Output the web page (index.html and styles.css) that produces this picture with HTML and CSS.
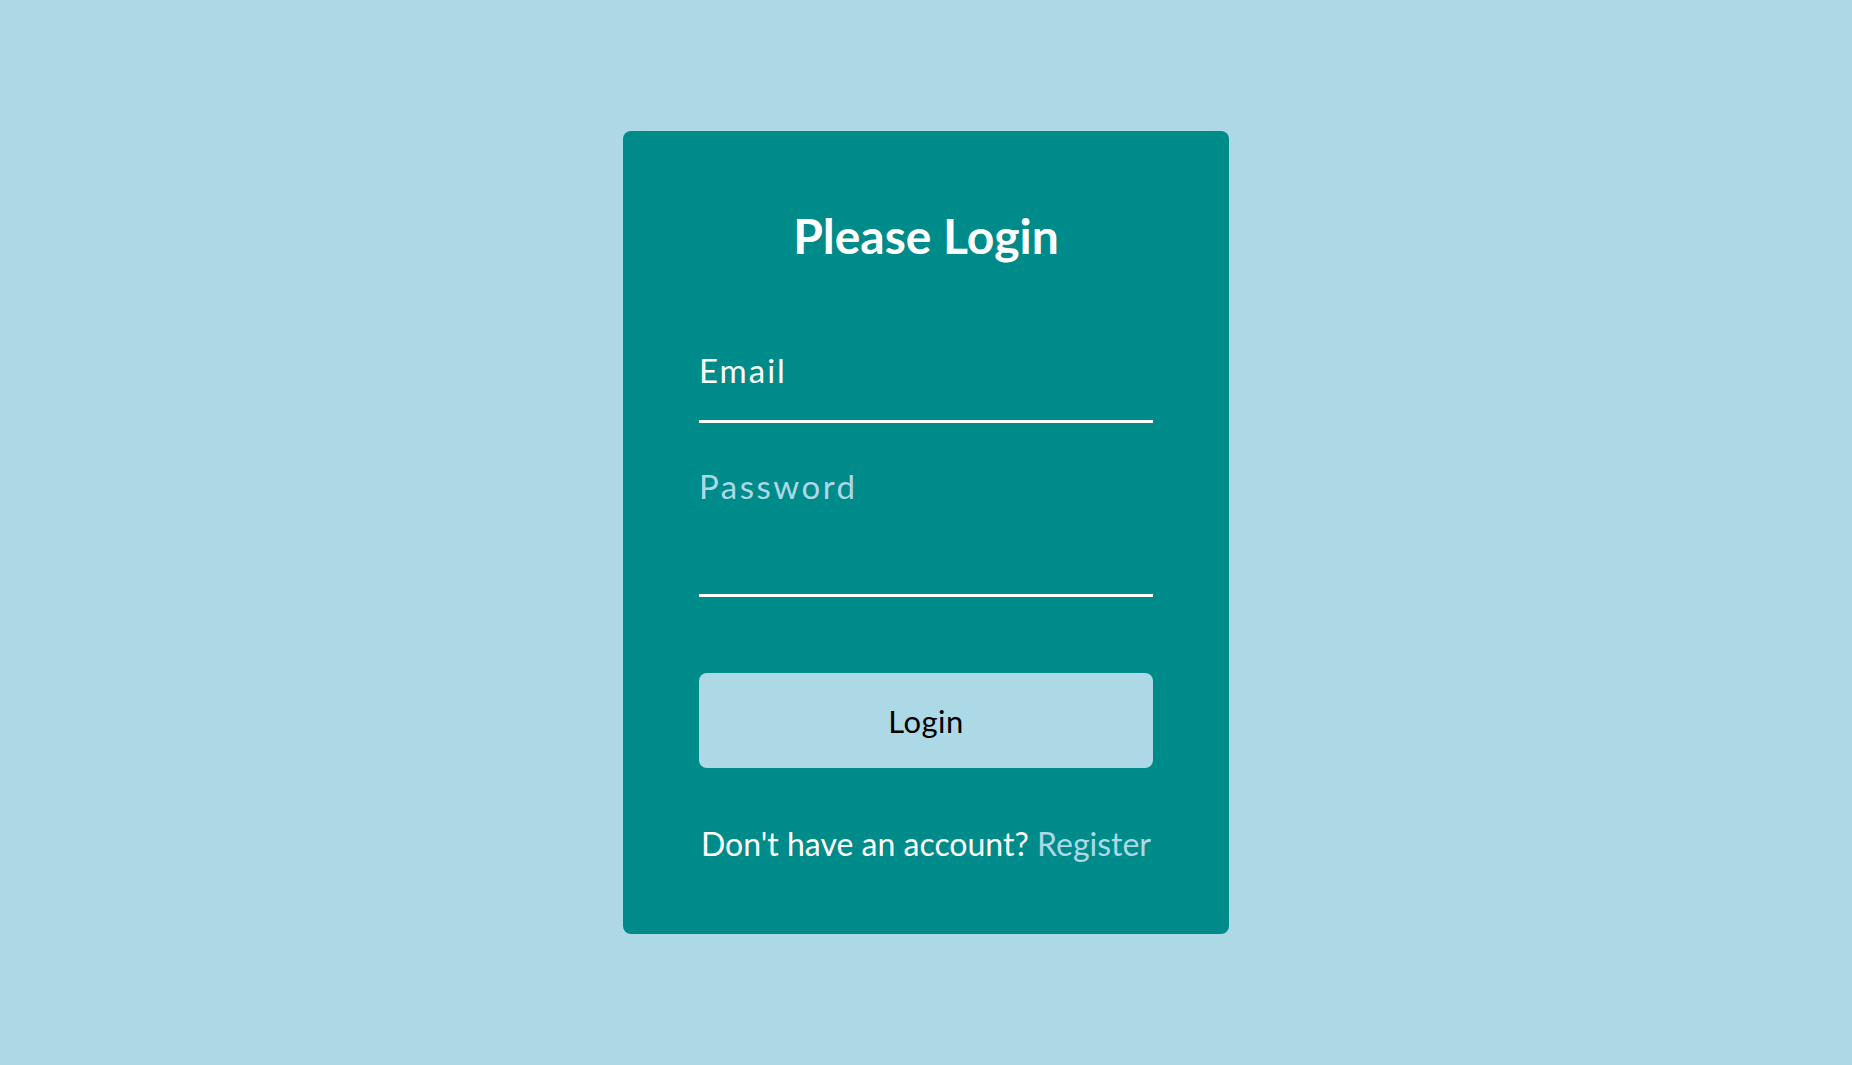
FILE: index.html
```html
<!DOCTYPE html>
<html lang="en">
<head>
  <meta charset="UTF-8">
  <meta name="viewport" content="width=device-width, initial-scale=1.0">
  <title>Login</title>
  <link rel="stylesheet" href="styles.css">
</head>
<body>
  <main class="card">
    <h1>Please Login</h1>

    <form class="login-form" onsubmit="return false">
      <input type="email" class="email" placeholder="Email">
      <input type="password" class="password" placeholder="Password">
      <button type="submit">Login</button>
    </form>

    <p class="register">Don't have an account? <a href="#">Register</a></p>
  </main>
</body>
</html>
```

FILE: styles.css
```css
body {
  font-family: Lato, "Open Sans", sans-serif;
  background-color: #add8e6;
  margin: 0;
  min-height: 100vh;
  display: flex;
  align-items: center;
  justify-content: center;
}
.card {
  width: 606px;
  box-sizing: border-box;
  background-color: #008b8b;
  border-radius: 8px;
  padding: 76px 76px 70px;
}
h1 {
  margin: 0;
  color: white;
  font-size: 48px;
  font-weight: bold;
  line-height: 1.2;
  text-align: center;
}
.login-form {
  display: flex;
  flex-direction: column;
}
input {
  width: 100%;
  box-sizing: border-box;
  font: inherit;
  font-size: 33px;
  letter-spacing: 2px;
  line-height: 1.2;
  color: white;
  background: transparent;
  border: none;
  border-bottom: 3px solid white;
  outline: none;
  padding: 9px 0 29px;
}
.email {
  margin-top: 77px;
}
.email::placeholder {
  color: white;
  opacity: 1;
}
.password {
  margin-top: 35px;
  padding-bottom: 88px;
  letter-spacing: 2.5px;
}
.password::placeholder {
  color: #add8e6;
  opacity: 1;
}
button {
  margin-top: 76px;
  height: 95px;
  background-color: #add8e6;
  color: black;
  font: inherit;
  font-size: 31px;
  letter-spacing: 0.5px;
  border: none;
  border-radius: 8px;
  cursor: pointer;
}
.register {
  margin: 57px 0 0;
  color: white;
  font-size: 32px;
  line-height: 1.2;
  text-align: center;
}
.register a {
  color: #add8e6;
  text-decoration: none;
}
```
